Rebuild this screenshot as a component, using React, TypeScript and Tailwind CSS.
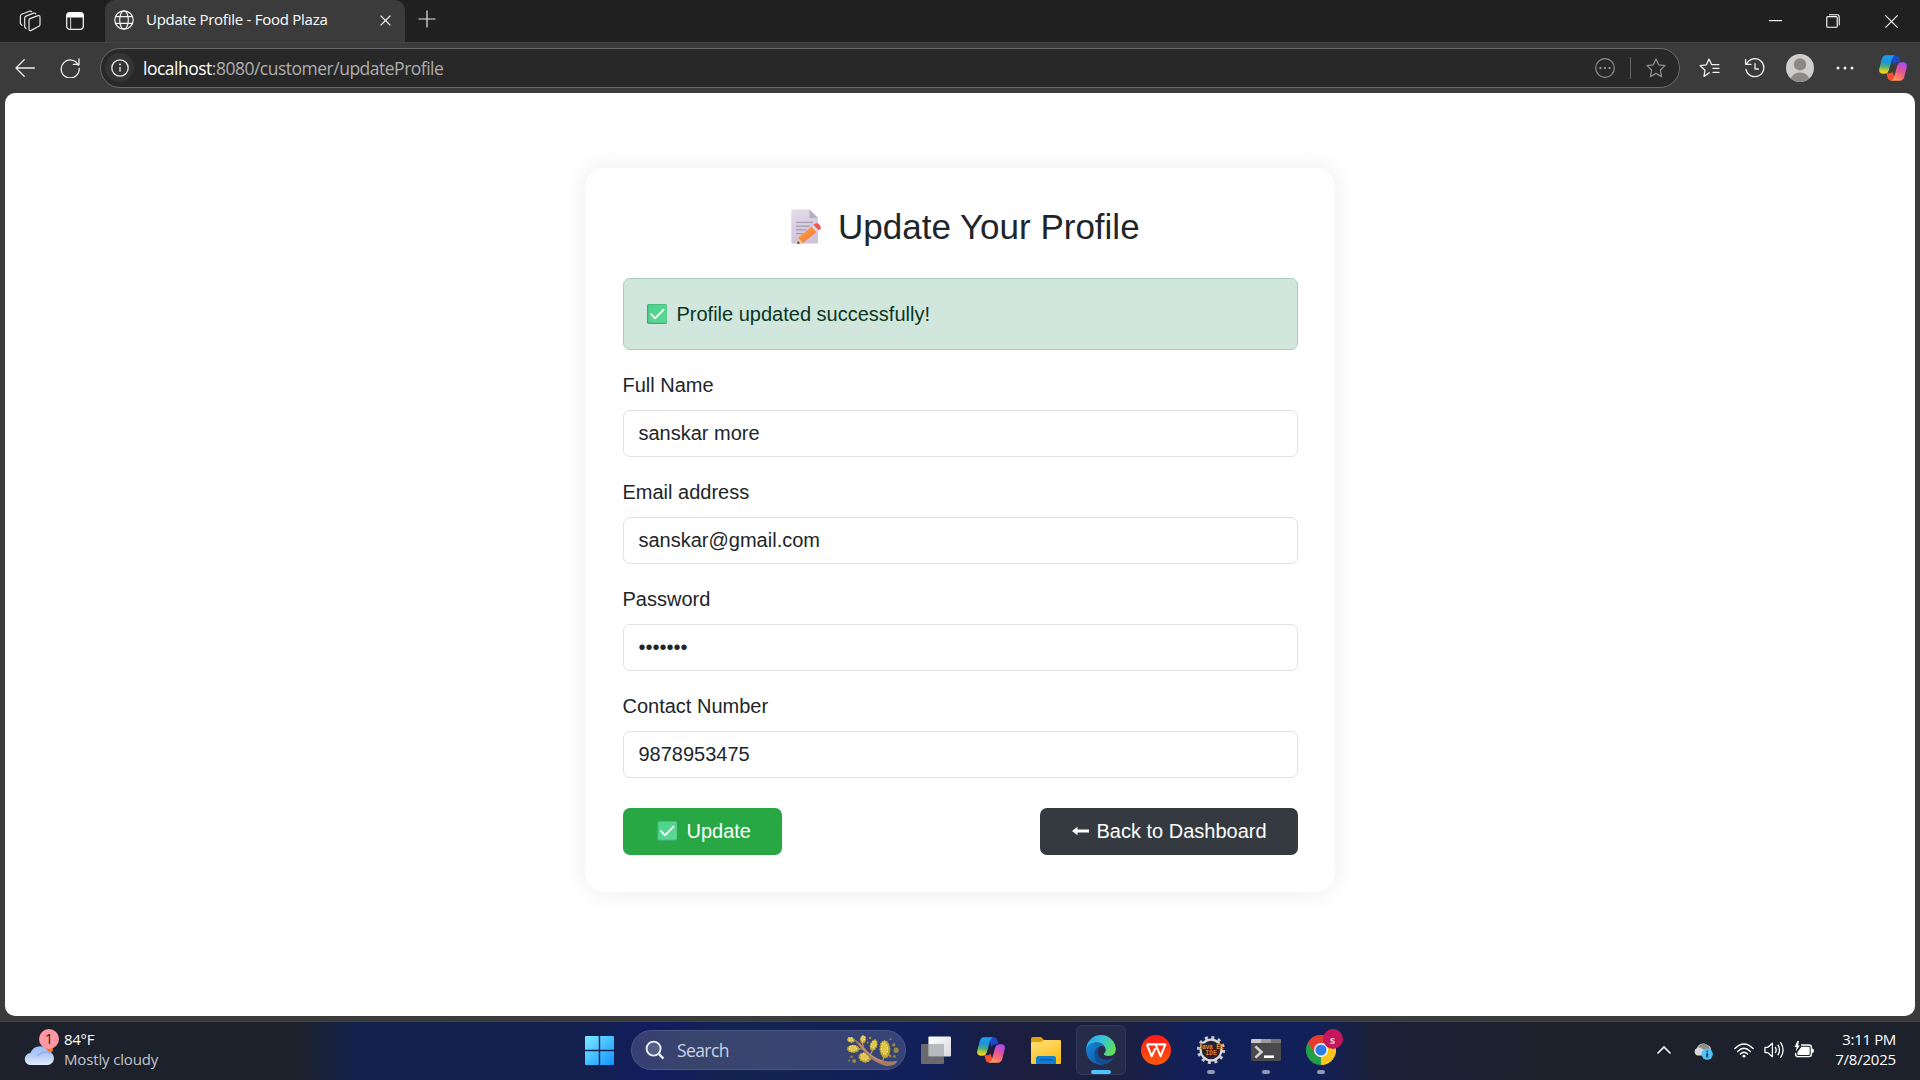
import React from "react";

const UI = "font-['Open_Sans',sans-serif]";

function CheckEmoji({ id, className }: { id: string; className: string }) {
  return (
    <svg viewBox="0 0 20 20" className={className}>
      <defs>
        <linearGradient id={id} x1="0" y1="0" x2="1" y2="1">
          <stop offset="0" stopColor="#4cd28c" />
          <stop offset="1" stopColor="#5fd895" />
        </linearGradient>
      </defs>
      <rect width="20" height="20" rx="1.8" fill="#3fa873" />
      <rect x="1.2" y="0.6" width="18.6" height="18.2" rx="1.4" fill={`url(#${id})`} />
      <path d="M4 10.2 L8 14.4 L16.6 5.6" fill="none" stroke="#fff" strokeWidth="1.7" strokeLinecap="round" strokeLinejoin="round" />
    </svg>
  );
}

function MemoEmoji() {
  return (
    <svg viewBox="0 0 30 35" className="h-[35px] w-[30px]">
      <defs>
        <linearGradient id="paper" x1="0" y1="0" x2="0.3" y2="1">
          <stop offset="0" stopColor="#e4dce9" />
          <stop offset="1" stopColor="#cfc2da" />
        </linearGradient>
        <linearGradient id="pencil" x1="0" y1="0" x2="1" y2="1">
          <stop offset="0" stopColor="#ffa64d" />
          <stop offset="1" stopColor="#f0762c" />
        </linearGradient>
      </defs>
      <path d="M0.5 0.5 H18.5 L27 9 V33.5 Q27 34.6 26 34.6 H1.5 Q0.3 34.6 0.3 33.5 V1.5 Q0.3 0.5 0.5 0.5Z" fill="url(#paper)" />
      <path d="M18.5 0.5 L27 9 H18.5Z" fill="#b9adc1" />
      <path d="M5 13.3H22M5 17.2H19M5 20.8H15M5 24.6H12" stroke="#9b91a5" strokeWidth="1" fill="none" />
      <path d="M7 29 L20.5 17.5 L25.6 23 L12 34 L6.3 34.7Z" fill="url(#pencil)" />
      <path d="M7.2 28.8 L12 33.9 L6.3 34.7Z" fill="#f3c49b" />
      <path d="M6.9 32 L9 34.4 L6.3 34.8Z" fill="#3c3440" />
      <path d="M20.3 17.7 L22.6 15.7 L27.8 21.2 L25.5 23.1Z" fill="#d9d0ea" />
      <path d="M22.5 15.8 Q24.6 13.6 26.6 14.3 Q30 16.4 30 19 Q29.6 20.5 27.7 21.2Z" fill="#f9524d" />
    </svg>
  );
}

function CopilotIcon({ id, className }: { id: string; className: string }) {
  return (
    <svg viewBox="0 0 84 78" className={className}>
      <defs>
        <linearGradient id={`${id}a`} x1="0.4" y1="0" x2="0.3" y2="1">
          <stop offset="0" stopColor="#17a3ee" />
          <stop offset="0.35" stopColor="#2090dc" />
          <stop offset="0.62" stopColor="#4fb072" />
          <stop offset="0.85" stopColor="#d8cf2a" />
          <stop offset="1" stopColor="#f8d01e" />
        </linearGradient>
        <linearGradient id={`${id}b`} x1="0.7" y1="0" x2="0.3" y2="1">
          <stop offset="0" stopColor="#a74df0" />
          <stop offset="0.4" stopColor="#e0529f" />
          <stop offset="0.75" stopColor="#fb7367" />
          <stop offset="1" stopColor="#ffa05c" />
        </linearGradient>
      </defs>
      <path d="M40 1 H52 Q59 2 61 10 L64 22 H54 Q46 22 44 30 L38 14Z" fill="#1c49c9" />
      <path d="M22 55 H32 Q38 55 40 49 L46 66 Q44 76 38 77 Q28 77 26 69Z" fill="#f2512c" />
      <path d="M20 1 H47 Q41 4 39 12 L29 47 Q27 55 18 56 H10 Q-2 55 1 41 L8 13 Q11 2 20 1Z" fill={`url(#${id}a)`} />
      <path d="M63 77 H36 Q43 74 45 66 L55 31 Q57 23 66 22 H73 Q86 23 83 37 L76 65 Q73 76 63 77Z" fill={`url(#${id}b)`} />
    </svg>
  );
}

function TitleBar() {
  return (
    <header className="flex h-[42px] bg-[#202020]">
      <div className="flex w-[105px] items-center pb-px pl-[19px]">
        <svg viewBox="0 0 24 24" className="h-6 w-6" fill="none" stroke="#e6e6e6" strokeWidth="1.2" strokeLinejoin="round" strokeLinecap="round">
          <path d="M10 11.2 Q10 10 11.1 9.6 L19 6.6 Q21 6.2 21 7.8 V15.4 Q21 16.8 19.8 17.3 L12.2 21.4 Q10 22.2 10 20.4Z" />
          <path d="M7 19.6 L5.7 18 V9 Q5.7 7.6 7 7.1 L14.6 4.1 Q16 3.7 16.8 4.8" />
          <path d="M3 16.4 L1.4 14.6 V7 Q1.4 5.7 2.6 5.2 L10.4 2.2 Q11.8 1.8 12.6 2.7" />
        </svg>
        <svg viewBox="0 0 18 18" className="ml-[23px] h-[18px] w-[18px]">
          <rect x="0.7" y="0.7" width="16.6" height="16.6" rx="3" fill="none" stroke="#eee" strokeWidth="1.3" />
          <path d="M0.5 5.5V3Q0.5 0.5 3 0.5H15Q17.5 0.5 17.5 3V5.5Z" fill="#fff" />
          <path d="M4.6 5.5V17" stroke="#ccc" strokeWidth="1.1" />
        </svg>
      </div>
      <div className="flex w-[300px] items-center rounded-t-[10px] bg-[#3b3b3b] pb-[2px] pl-[9px]">
        <svg viewBox="0 0 20 20" className="h-5 w-5" fill="none" stroke="#f2f2f2" strokeWidth="1.2">
          <circle cx="10" cy="10" r="9.2" />
          <ellipse cx="10" cy="10" rx="4.3" ry="9.2" />
          <path d="M1.6 6.6H18.4M1.6 13.4H18.4" />
        </svg>
        <span className={`${UI} mb-[2px] ml-3 w-[224px] text-[15px] leading-5 tracking-[-0.26px] whitespace-nowrap text-white`}>Update Profile - Food Plaza</span>
        <svg viewBox="0 0 11 11" className="mt-[1px] ml-[10px] h-[11px] w-[11px]" stroke="#fff" strokeWidth="1.3">
          <path d="M0.6 0.6L10.4 10.4M10.4 0.6L0.6 10.4" />
        </svg>
      </div>
      <div className="flex flex-1 items-center pb-[4px] pl-[13px]">
        <svg viewBox="0 0 18 18" className="h-[18px] w-[18px]" stroke="#e8e8e8" strokeWidth="1.2">
          <path d="M9 0.5V17.5M0.5 9H17.5" />
        </svg>
      </div>
      <div className="flex w-[174px] *:flex *:w-[58px] *:items-center *:justify-center">
        <span>
          <svg viewBox="0 0 13 2" className="h-[2px] w-[13px]"><rect y="0" width="13" height="1.2" fill="#fff" /></svg>
        </span>
        <span>
          <svg viewBox="0 0 14 14" className="h-[14px] w-[14px]" fill="none" stroke="#fff" strokeWidth="1.1">
            <rect x="0.8" y="2.6" width="10.4" height="10.6" rx="1" />
            <path d="M3 0.8H11.4Q13.2 0.8 13.2 2.6V11.2" />
          </svg>
        </span>
        <span>
          <svg viewBox="0 0 13 13" className="h-[13px] w-[13px]" stroke="#fff" strokeWidth="1.1"><path d="M0.4 0.4L12.6 12.6M12.6 0.4L0.4 12.6" /></svg>
        </span>
      </div>
    </header>
  );
}

function Star({ className, stroke }: { className: string; stroke: string }) {
  return (
    <svg viewBox="0 0 20 20" className={className} fill="none" stroke={stroke} strokeWidth="1.3" strokeLinejoin="round">
      <path d="M10 1 L12.7 6.8 L19 7.6 L14.4 12 L15.6 18.6 L10 15.4 L4.4 18.6 L5.6 12 L1 7.6 L7.3 6.8Z" />
    </svg>
  );
}

function Toolbar() {
  return (
    <nav className="flex h-[51px] items-center border-t border-[#444] bg-[#3b3b3b] pb-px">
      <div className="flex w-[100px] items-center pl-[15px]">
        <svg viewBox="0 0 20 18" className="h-[18px] w-5" fill="none" stroke="#f0f0f0" strokeWidth="1.3" strokeLinejoin="round" strokeLinecap="round">
          <path d="M19.4 9H1M9.2 0.8L1 9L9.2 17.2" />
        </svg>
        <svg viewBox="0 0 20 20" className="ml-[25px] h-5 w-5" fill="none" stroke="#f0f0f0" strokeWidth="1.3" strokeLinecap="round" strokeLinejoin="round">
          <path d="M18.4 7.2 A9 9 0 1 0 19.2 10.5M19 0.9V6.4H13.4" />
        </svg>
      </div>
      <div className="flex h-10 w-[1580px] items-center rounded-full border border-[#6a6a6a] bg-[#282828] pl-1">
        <span className="flex h-[29px] w-[29px] items-center justify-center rounded-full bg-[#343434]">
          <svg viewBox="0 0 18 18" className="h-[18px] w-[18px]">
            <circle cx="9" cy="9" r="8.2" fill="none" stroke="#eee" strokeWidth="1.3" />
            <circle cx="9" cy="5.4" r="0.95" fill="#eee" />
            <path d="M9 8V12.8" stroke="#eee" strokeWidth="1.3" />
          </svg>
        </span>
        <span className={`${UI} ml-[9px] flex-1 text-[17.5px] leading-6 tracking-[-0.5px] whitespace-nowrap text-[#aeaeae]`}>
          <span className="text-white">localhost</span>:8080/customer/updateProfile
        </span>
        <svg viewBox="0 0 20 20" className="h-5 w-5">
          <circle cx="10" cy="10" r="9.3" fill="none" stroke="#8f8f8f" strokeWidth="1.2" />
          <g fill="#a8a8a8"><circle cx="5.4" cy="10" r="1.1" /><circle cx="10" cy="10" r="1.1" /><circle cx="14.6" cy="10" r="1.1" /></g>
        </svg>
        <span className="ml-[15px] h-[22px] w-px bg-[#666]" />
        <Star className="mr-[13px] ml-[15px] h-5 w-5" stroke="#8f8f8f" />
      </div>
      <div className="flex flex-1 items-center pl-[19px]">
        <svg viewBox="0 0 21 20" className="h-5 w-[21px]" fill="none" stroke="#f0f0f0" strokeWidth="1.3" strokeLinejoin="round" strokeLinecap="round">
          <path d="M10.3 14.8 L5 18.4 L6 12.2 L1 7.6 L7.4 6.8 L10 1 L12.6 6.6 H20M14 10.4H20M14 14.4H20" />
        </svg>
        <svg viewBox="0 0 21 20" className="ml-6 h-5 w-[21px]" fill="none" stroke="#f0f0f0" strokeWidth="1.3" strokeLinejoin="round" strokeLinecap="round">
          <path d="M2.6 6 A9 9 0 1 1 2 11.4M1.6 1.4V6.3H7M11 5.6V11H14.4" />
        </svg>
        <svg viewBox="0 0 28 28" className="ml-[21px] h-7 w-7">
          <defs><clipPath id="avatar"><circle cx="14" cy="14" r="14" /></clipPath></defs>
          <g clipPath="url(#avatar)">
            <rect width="28" height="28" fill="#d0cecc" />
            <circle cx="14" cy="10.4" r="6.2" fill="#8d8987" />
            <ellipse cx="14" cy="26" rx="9.4" ry="7.6" fill="#8d8987" />
          </g>
        </svg>
        <svg viewBox="0 0 18 4" className="ml-[22px] h-1 w-[18px]" fill="#f0f0f0">
          <circle cx="2" cy="2" r="1.5" /><circle cx="9" cy="2" r="1.5" /><circle cx="16" cy="2" r="1.5" />
        </svg>
        <CopilotIcon id="nav" className="ml-[25px] h-[26px] w-7" />
      </div>
    </nav>
  );
}

function Field({ label, value }: { label: string; value: string }) {
  return (
    <div className="mt-5">
      <label className="block leading-[30px]">{label}</label>
      <div className="mt-[10px] h-[47px] rounded-[7px] border border-[#dee2e6] px-[15px] py-[7px] leading-[30px]">{value}</div>
    </div>
  );
}

function ProfileCard() {
  return (
    <main className="mx-auto mt-[75px] h-[724px] w-[750px] rounded-[20px] bg-white px-[37.5px] pt-[37.5px] font-['Liberation_Sans',Arial,sans-serif] text-[20px] text-[#212529] shadow-[0_0_25px_rgba(0,0,0,0.08)]">
      <h1 className="flex h-[42px] items-center pl-[168px] text-[35px] leading-[42px] whitespace-nowrap">
        <MemoEmoji />
        <span className="ml-[17.5px]">Update Your Profile</span>
      </h1>
      <div className="mt-[30px] flex h-[72px] items-center rounded-[7px] border border-[#a3cfbb] bg-[#d1e7dd] pl-[23px] text-[#0a3622]">
        <CheckEmoji id="alertCheck" className="h-5 w-5" />
        <span className="ml-[10px] leading-[30px]">Profile updated successfully!</span>
      </div>
      <Field label="Full Name" value="sanskar more" />
      <Field label="Email address" value="sanskar@gmail.com" />
      <Field label="Password" value="•••••••" />
      <Field label="Contact Number" value="9878953475" />
      <div className="mt-[30px] flex justify-between text-white">
        <button className="flex h-[47px] w-[159px] items-center rounded-[7px] bg-[#28a745] pl-[34px]">
          <CheckEmoji id="buttonCheck" className="h-5 w-5" />
          <span className="ml-[10px] leading-[30px]">Update</span>
        </button>
        <button className="flex h-[47px] w-[258px] items-center rounded-[7px] bg-[#343a40] pl-[32px]">
          <svg viewBox="0 0 17 10" className="h-[10px] w-[17px]"><path d="M0 5L5.5 0.8V3.4H17V6.6H5.5V9.2Z" fill="#fff" /></svg>
          <span className="ml-[8px] leading-[30px]">Back to Dashboard</span>
        </button>
      </div>
    </main>
  );
}

const PODS = [
  [92, 76, 11, 7, 15], [129, 74, 8, 11, 10], [161, 92, 10, 16, 20], [99, 103, 18, 11, 0],
  [134, 129, 18, 14, 15], [195, 104, 15, 26, -5],
];
const POLLEN = [
  [229, 107, 8], [102, 140, 6], [222, 91, 5], [150, 70, 4], [94, 127, 4], [212, 74, 3],
  [224, 126, 4], [87, 138, 3], [166, 76, 3], [211, 125, 4], [143, 84, 3],
];

function Wattle() {
  return (
    <svg viewBox="78 58 168 100" className="h-[33px] w-14">
      {POLLEN.map(([x, y, r], i) => (
        <circle key={i} cx={x} cy={y} r={r} fill="#99893a" />
      ))}
      <path d="M112 103H136M150 122L160 104M188 140L194 122M130 98L126 82" stroke="#b58c70" strokeWidth="4" />
      {PODS.map(([x, y, rx, ry, a], i) => (
        <g key={i} transform={`rotate(${a} ${x} ${y})`}>
          <ellipse cx={x} cy={y} rx={rx} ry={ry} fill="#c2a72f" stroke="#c2a72f" strokeWidth="3" strokeDasharray="5 3" />
          <ellipse cx={x - 1} cy={y - 2} rx={rx * 0.62} ry={ry * 0.68} fill="#dcc64e" strokeDasharray="4 4" stroke="#f2e482" strokeWidth="4" />
        </g>
      ))}
      <path d="M97 70 Q116 80 130 96 Q156 130 192 139 Q212 144 233 139 Q224 158 196 154 Q160 144 139 120 Q118 96 97 70Z" fill="#a67c60" />
      <path d="M118 88 Q146 126 186 141" stroke="#cfa98c" strokeWidth="2.5" fill="none" />
    </svg>
  );
}

function AppCell({ children, running }: { children: React.ReactNode; running?: boolean }) {
  return (
    <div className="relative flex h-[50px] w-[55px] items-center justify-center">
      {children}
      {running && <span className="absolute bottom-[1px] h-1 w-2 rounded-full bg-[#9298b0]" />}
    </div>
  );
}

function Taskbar() {
  return (
    <footer className={`${UI} flex h-[59px] items-center border-t border-[#3a4254] bg-[linear-gradient(90deg,#1d212b_0%,#1d212b_15.5%,#13224c_18.5%,#13204f_31%,#121c60_34%,#142450_38%,#11205a_48%,#1b1e3c_53%,#1a1f44_59%,#12205a_62%,#12205a_68.5%,#1b1f38_71.5%,#1c212c_80%,#1c212c_100%)] pb-[2px] text-[15px] leading-5 text-white`}>
      <div className="flex w-[585px] items-center pl-6">
        <div className="relative h-[30px] w-8">
          <svg viewBox="0 0 32 22" className="absolute bottom-[-1px] left-0 h-[22px] w-8">
            <defs>
              <linearGradient id="cloud" x1="0" y1="0" x2="0" y2="1">
                <stop offset="0" stopColor="#9dbcf5" />
                <stop offset="0.5" stopColor="#b5cdf7" />
                <stop offset="1" stopColor="#e3eefc" />
              </linearGradient>
            </defs>
            <circle cx="24" cy="5" r="5" fill="#f07a1c" />
            <path d="M7 21 A6 6 0 0 1 6.5 9 A9.5 9.5 0 0 1 24 7.5 A6.8 6.8 0 0 1 24 21Z" fill="url(#cloud)" />
            <path d="M13 12 Q20 6 27 9" stroke="#88a8ea" strokeWidth="2" fill="none" opacity="0.7" />
          </svg>
          <span className="absolute -top-[6px] left-[15px] flex h-5 w-5 items-center justify-center rounded-full bg-[#ff98a4] text-[14px] text-[#1c1c1c]">1</span>
        </div>
        <div className="mb-[2px] ml-2 whitespace-nowrap">
          <div className="tracking-[-0.3px]">84°F</div>
          <div className="tracking-[-0.15px] text-[#c3c6cc]">Mostly cloudy</div>
        </div>
      </div>
      <svg viewBox="0 0 29 29" className="h-[29px] w-[29px]">
        <defs>
          <linearGradient id="win" x1="0" y1="0" x2="1" y2="1">
            <stop offset="0" stopColor="#7deaff" />
            <stop offset="1" stopColor="#0f94ff" />
          </linearGradient>
        </defs>
        <path d="M1 0H13.8V13.8H0V1Q0 0 1 0ZM15.2 0H28Q29 0 29 1V13.8H15.2ZM0 15.2H13.8V29H1Q0 29 0 28ZM15.2 15.2H29V28Q29 29 28 29H15.2Z" fill="url(#win)" />
      </svg>
      <div className="ml-[17px] flex h-10 w-[275px] items-center rounded-full border border-[#4b5786] bg-[linear-gradient(90deg,#373f73,#37456b_25%,#3a4470_50%,#364378)] pl-[13px]">
        <svg viewBox="0 0 20 20" className="h-5 w-5" fill="none" stroke="#eceff5">
          <circle cx="8.6" cy="8.6" r="7" strokeWidth="1.9" fill="#566087" />
          <path d="M13.8 13.8L18.4 18.6" strokeWidth="2.4" />
        </svg>
        <span className="ml-[12px] flex-1 text-[17.5px] tracking-[-0.6px] text-[#cdd2e2]">Search</span>
        <Wattle />
        <span className="w-[3px]" />
      </div>
      <div className="ml-[2.5px] flex">
        <AppCell>
          <svg viewBox="0 0 30 28" className="h-7 w-[30px]">
            <defs>
              <linearGradient id="tv" x1="0" y1="0" x2="1" y2="1"><stop offset="0" stopColor="#fff" /><stop offset="1" stopColor="#d9d9de" /></linearGradient>
            </defs>
            <rect x="7.4" y="0.4" width="22.6" height="20" rx="1" fill="url(#tv)" />
            <rect x="0" y="8" width="23" height="20" rx="1" fill="#6a6a6e" />
            <rect x="7.4" y="8" width="15.6" height="12.4" fill="#b8b9bc" />
          </svg>
        </AppCell>
        <AppCell><CopilotIcon id="task" className="h-[26px] w-7" /></AppCell>
        <AppCell>
          <svg viewBox="0 0 30 27" className="h-[27px] w-[30px]">
            <defs>
              <linearGradient id="fold" x1="0" y1="0" x2="0.6" y2="1"><stop offset="0" stopColor="#ffe07a" /><stop offset="1" stopColor="#fcbf1c" /></linearGradient>
            </defs>
            <path d="M0 2Q0 0 2 0H10L13.5 3.4V8H0Z" fill="#e0a108" />
            <path d="M0 6.5Q0 5 1.5 5H10L13 3H29Q30 3 30 4V26Q30 27 29 27H1Q0 27 0 26Z" fill="url(#fold)" />
            <path d="M5 27V21.5Q5 19 7.5 19H22.5Q25 19 25 21.5V27Z" fill="#117fd1" />
            <path d="M8.5 22.8H21.5" stroke="#0b4f8c" strokeWidth="1" />
          </svg>
        </AppCell>
        <div className="relative mx-[2.5px] flex h-[50px] w-[50px] items-center justify-center rounded-[6px] border border-[#343a5a] bg-[#272b4a]">
          <svg viewBox="0 0 30 30" className="h-[30px] w-[30px]">
            <defs>
              <linearGradient id="edgeTop" x1="0" y1="0.2" x2="1" y2="0.6">
                <stop offset="0" stopColor="#2aa5ea" /><stop offset="0.5" stopColor="#35c5d8" /><stop offset="1" stopColor="#63df57" />
              </linearGradient>
              <linearGradient id="edgeLow" x1="0" y1="0" x2="1" y2="1">
                <stop offset="0" stopColor="#1687dc" /><stop offset="1" stopColor="#0f4f9e" />
              </linearGradient>
              <clipPath id="edgeClip"><circle cx="15" cy="15" r="15" /></clipPath>
            </defs>
            <g clipPath="url(#edgeClip)">
              <path d="M0 15 A15 15 0 0 1 30 13.5 Q30 21 22.5 21 Q17.5 21 18 18.6 Q20.4 17 19.4 13.2 Q17 7 9.5 7.4 Q2 8.4 0 15Z" fill="url(#edgeTop)" />
              <path d="M0 15 Q1.6 8 9.4 7.4 Q17.4 7.6 19 12.4 Q17 10.6 14.4 11.2 Q9 13 9.5 19 Q11 28 20 28 Q16 31 11 29.6 Q0 26 0 15Z" fill="url(#edgeLow)" />
              <path d="M12.6 12 Q9.6 22 18 24.6 Q23 25.8 28 22.6 Q25 29 18.6 29.6 Q9 29 8.4 20 Q8.4 14 12.6 12Z" fill="#164c93" />
            </g>
          </svg>
          <span className="absolute bottom-0 h-1 w-5 rounded-full bg-[#4cc2ff]" />
        </div>
        <AppCell>
          <svg viewBox="0 0 30 30" className="h-[30px] w-[30px]">
            <defs><linearGradient id="wps" x1="0" y1="0" x2="0" y2="1"><stop offset="0" stopColor="#ff1a1a" /><stop offset="1" stopColor="#ff5a0a" /></linearGradient></defs>
            <circle cx="15" cy="15" r="15" fill="url(#wps)" />
            <path d="M5.8 9.4H24.4L19.6 21.2L14.6 9.6M5.8 9.4L10.6 21.2L14.4 13.4" fill="none" stroke="#fff" strokeWidth="2.1" strokeLinejoin="round" />
          </svg>
        </AppCell>
        <AppCell running>
          <svg viewBox="0 0 30 30" className="h-[30px] w-[30px]">
            <circle cx="15" cy="15" r="12.6" fill="none" stroke="#c9c9c9" strokeWidth="3" strokeDasharray="3 3.6" />
            <circle cx="15" cy="15" r="10.4" fill="#252032" stroke="#dadada" strokeWidth="2.2" />
            <rect x="5" y="8.6" width="20" height="5.4" fill="#292331" />
            <text x="15" y="13.8" textAnchor="middle" fontFamily="Liberation Mono" fontSize="6.4" fontWeight="700" fill="#e88a2c" textLength="25">Java EE</text>
            <text x="15" y="20.4" textAnchor="middle" fontFamily="Liberation Mono" fontSize="6.4" fontWeight="700" fill="#e07c1e">IDE</text>
          </svg>
        </AppCell>
        <AppCell running>
          <svg viewBox="0 0 30 22" className="h-[22px] w-[30px]">
            <rect width="30" height="22" rx="1.4" fill="#4a4a4c" />
            <path d="M1.4 0H10V4H0V1.4Q0 0 1.4 0Z" fill="#c9c9c9" />
            <rect x="10" width="10" height="4" fill="#9c9c9c" />
            <path d="M20 0H28.6Q30 0 30 1.4V4H20Z" fill="#757575" />
            <path d="M4.4 7.4L10.4 13L4.4 18.6" fill="none" stroke="#d4d4d4" strokeWidth="2.6" />
            <rect x="13" y="16.4" width="10" height="2.6" fill="#fff" />
          </svg>
        </AppCell>
        <AppCell running>
          <svg viewBox="0 0 30 30" className="h-[30px] w-[30px]">
            <path d="M15 15L2 7.5A15 15 0 0 1 28 7.5Z" fill="#e33b2e" />
            <path d="M15 15L28 7.5A15 15 0 0 1 15 30Z" fill="#fcc31e" />
            <path d="M15 15L15 30A15 15 0 0 1 2 7.5Z" fill="#23a047" />
            <path d="M15 8H28.2A15 15 0 0 1 15 30L21 18.6Z" fill="#fcc31e" />
            <path d="M2 7.5A15 15 0 0 1 28.2 8H15L9 18.6Z" fill="#e33b2e" />
            <circle cx="15" cy="15" r="7" fill="#fff" />
            <circle cx="15" cy="15" r="5.6" fill="#2f7bea" />
          </svg>
          <span className="absolute top-1 right-[6px] flex h-5 w-5 items-center justify-center rounded-full bg-[#c2185b] text-[11px] leading-none font-bold text-[#f3bcd2]">s</span>
        </AppCell>
      </div>
      <div className="flex flex-1 items-center justify-end pr-6">
        <svg viewBox="0 0 14 8" className="h-2 w-[14px]" fill="none" stroke="#fff" strokeWidth="1.6" strokeLinecap="round"><path d="M1 7L7 1L13 7" /></svg>
        <svg viewBox="0 0 20 18" className="mt-[2px] ml-[22px] h-[18px] w-5">
          <path d="M4 13.4A4 4 0 0 1 4 6A6.6 6.6 0 0 1 14.6 3.2A4.6 4.6 0 0 1 18 8L10 13.4Z" fill="#d8d8d8" />
          <path d="M5 5A6.6 6.6 0 0 1 16 4.6L18 9L12 8Z" fill="#8d8d8d" />
          <circle cx="14.2" cy="12.2" r="5.6" fill="#52c0f5" />
          <path d="M14.2 8.8V10.2M14.2 11.2V15.4" stroke="#10202c" strokeWidth="1.5" />
        </svg>
        <svg viewBox="0 0 20 15" className="ml-[21px] h-[15px] w-5" fill="none" stroke="#fff" strokeWidth="1.4" strokeLinecap="round">
          <path d="M0.9 5.6Q10 -3.4 19.1 5.6M3.7 8.4Q10 2.2 16.3 8.4M6.4 11.1Q10 7.6 13.6 11.1" />
          <circle cx="10" cy="13.2" r="1.4" fill="#fff" stroke="none" />
        </svg>
        <svg viewBox="0 0 21 18" className="ml-[10px] h-[18px] w-[21px]" fill="none" stroke="#fff" strokeWidth="1.3" strokeLinecap="round" strokeLinejoin="round">
          <path d="M1 6.4H3.6L8.4 2.2V15.8L3.6 11.6H1Z" />
          <path d="M11.4 6.4Q13 9 11.4 11.6M14 4.2Q17 9 14 13.8M16.6 1.6Q21.6 9 16.6 16.4" />
        </svg>
        <svg viewBox="0 0 20 17" className="mb-[2px] ml-[9px] h-[17px] w-5">
          <path d="M7 4H15Q17.4 4 17.4 6.4V13Q17.4 15.6 15 15.6H4Q1.6 15.6 1.6 13V12" fill="none" stroke="#fff" strokeWidth="1.4" />
          <path d="M18 7.6Q20 7.6 20 9.8T18 12Z" fill="#fff" />
          <path d="M7.4 5.8H14.6Q15.7 5.8 15.7 7V12.8Q15.7 13.9 14.6 13.9H4.4Q3.3 13.9 3.3 12.6L3.6 11Z" fill="#fff" />
          <path d="M3.4 0L0.6 6H2.6L1.8 10.4L5.8 4.4H4L5 0Z" fill="#fff" />
        </svg>
        <div className="mb-[2px] w-[82px] text-right whitespace-nowrap">
          <div className="tracking-[-0.35px]">3:11 PM</div>
          <div className="tracking-[-0.2px]">7/8/2025</div>
        </div>
      </div>
    </footer>
  );
}

export default function App() {
  return (
    <div className="flex h-[1080px] w-[1920px] flex-col overflow-hidden bg-[#3b3b3b]">
      <TitleBar />
      <Toolbar />
      <div className="mx-[5px] mb-[5px] flex-1 overflow-hidden rounded-[10px] bg-white">
        <ProfileCard />
      </div>
      <Taskbar />
    </div>
  );
}
